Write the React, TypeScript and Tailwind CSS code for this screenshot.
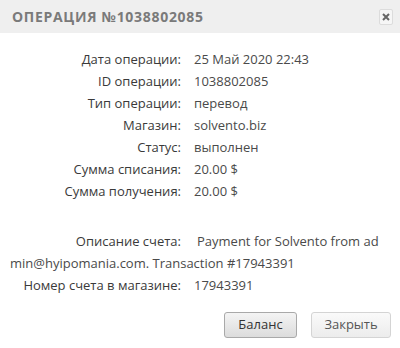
import React from "react";

const rows: [string, string][] = [
  ["Дата операции:", "25 Май 2020 22:43"],
  ["ID операции:", "1038802085"],
  ["Тип операции:", "перевод"],
  ["Магазин:", "solvento.biz"],
  ["Статус:", "выполнен"],
  ["Сумма списания:", "20.00 $"],
  ["Сумма получения:", "20.00 $"],
];

export default function App() {
  return (
    <div className="w-[400px] h-[348px] bg-white overflow-hidden" style={{ fontFamily: '"Open Sans", sans-serif' }}>
      <div className="h-[33px] bg-[#efefef] flex items-center justify-between pl-[12px] pr-[7px]">
        <div className="text-[14px] font-bold tracking-[0.7px] text-[#7a7a7a]">ОПЕРАЦИЯ №1038802085</div>
        <div className="w-[14px] h-[16px] border border-[#dcdcdc] bg-[#f6f6f6] rounded-[2px] flex items-center justify-center">
          <svg width="8" height="8" viewBox="0 0 8 8">
            <path d="M1 1L7 7M7 1L1 7" stroke="#666" strokeWidth="2" />
          </svg>
        </div>
      </div>
      <div className="pt-[15px] text-[13px] text-[#3a3a3a]">
        <div className="grid grid-cols-[181px_1fr] gap-x-[13px]">
          {rows.map(([l, v]) => (
            <React.Fragment key={l}>
              <div className="h-[22px] leading-[22px] text-right">{l}</div>
              <div className="h-[22px] leading-[22px] text-[#4a4a4a]">{v}</div>
            </React.Fragment>
          ))}
        </div>
        <div className="mt-[28px] grid grid-cols-[181px_1fr] gap-x-[16px]">
          <div className="h-[22px] leading-[22px] text-right">Описание счета:</div>
          <div className="h-[22px] leading-[22px] text-[#4a4a4a] whitespace-nowrap">Payment for Solvento from ad</div>
        </div>
        <div className="pl-[10px] h-[22px] leading-[22px] text-[#4a4a4a]">min@hyipomania.com. Transaction #17943391</div>
        <div className="grid grid-cols-[181px_1fr] gap-x-[13px]">
          <div className="h-[22px] leading-[22px] text-right">Номер счета в магазине:</div>
          <div className="h-[22px] leading-[22px] text-[#4a4a4a]">17943391</div>
        </div>
        <div className="flex justify-end gap-[14px] pr-[9px] mt-[16px]">
          <button className="w-[73px] h-[26px] rounded-[3px] border border-[#a9a9a9] bg-gradient-to-b from-[#f4f4f4] to-[#dcdcdc] text-[13px] text-[#333]">Баланс</button>
          <button className="w-[80px] h-[26px] rounded-[3px] border border-[#d4d4d4] bg-gradient-to-b from-[#fafafa] to-[#ececec] text-[13px] text-[#555]">Закрыть</button>
        </div>
      </div>
    </div>
  );
}
